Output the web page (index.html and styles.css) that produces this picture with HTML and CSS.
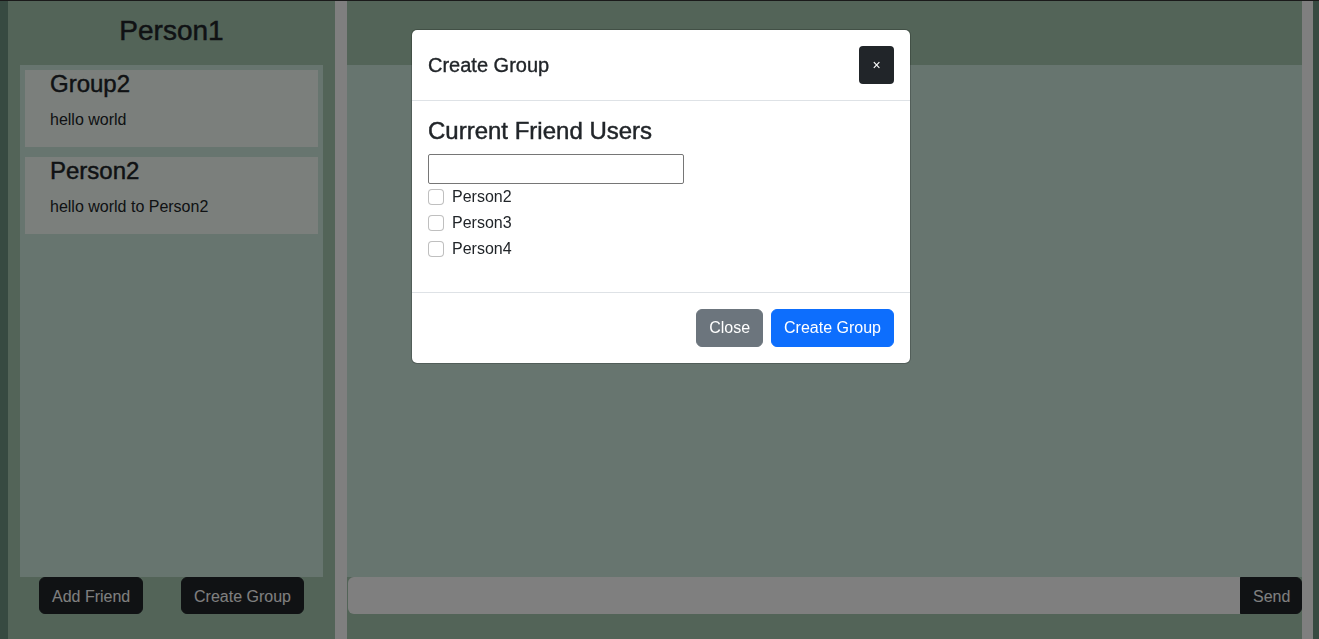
FILE: index.html
```html
<!DOCTYPE html>
<html lang="en">
<head>
<meta charset="utf-8">
<title>Chat</title>
<link rel="stylesheet" href="styles.css">
</head>
<body>
<div class="app">
  <aside class="sidebar">
    <h3 class="user-name">Person1</h3>
    <div class="chat-list">
      <div class="chat-card">
        <h4 class="chat-title">Group2</h4>
        <p class="chat-last">hello world</p>
      </div>
      <div class="chat-card">
        <h4 class="chat-title">Person2</h4>
        <p class="chat-last">hello world to Person2</p>
      </div>
    </div>
    <div class="side-actions">
      <button class="btn btn-dark">Add Friend</button>
      <button class="btn btn-dark">Create Group</button>
    </div>
  </aside>
  <div class="divider"></div>
  <main class="chat">
    <div class="chat-header"></div>
    <div class="chat-body"></div>
    <div class="chat-input-row">
      <input class="chat-input" type="text">
      <button class="btn btn-dark btn-send">Send</button>
    </div>
  </main>
  <div class="divider divider-right"></div>
</div>

<div class="backdrop"></div>
<div class="modal">
  <div class="modal-content">
    <div class="modal-header">
      <h5 class="modal-title">Create Group</h5>
      <button class="btn-x">×</button>
    </div>
    <div class="modal-body">
      <h4 class="section-title">Current Friend Users</h4>
      <input class="group-name" type="text">
      <ul class="friend-list">
        <li class="friend"><span class="check"></span><span>Person2</span></li>
        <li class="friend"><span class="check"></span><span>Person3</span></li>
        <li class="friend"><span class="check"></span><span>Person4</span></li>
      </ul>
    </div>
    <div class="modal-footer">
      <button class="btn btn-secondary">Close</button>
      <button class="btn btn-primary">Create Group</button>
    </div>
  </div>
</div>
</body>
</html>
```

FILE: styles.css
```css
* { box-sizing: border-box; }

html, body {
  margin: 0;
  height: 100%;
}

body {
  background: #6e9482;
  border-top: 1px solid #343434;
  font-family: "Liberation Sans", Arial, sans-serif;
  color: #212529;
  font-size: 16px;
  overflow: hidden;
}

.app {
  display: flex;
  height: 638px;
  padding: 0 6px 0 8px;
}

.sidebar {
  width: 327px;
  background: #a6c8b0;
  display: flex;
  flex-direction: column;
}

.user-name {
  margin: 0;
  height: 64px;
  padding-bottom: 5px;
  display: flex;
  align-items: center;
  justify-content: center;
  font-size: 28px;
  font-weight: 500;
  line-height: 1.2;
  -webkit-text-stroke: 0.5px currentColor;
}

.chat-list {
  flex: 1;
  margin: 0 12px;
  background: #ceeade;
  padding: 5px;
}

.chat-card {
  background: #f6fff8;
  height: 77px;
  padding-left: 25px;
  margin-bottom: 10px;
}

.chat-title {
  margin: 0 0 9px;
  font-size: 24px;
  font-weight: 500;
  line-height: 1.2;
  -webkit-text-stroke: 0.45px currentColor;
}

.chat-last {
  margin: 0;
  line-height: 24px;
}

.side-actions {
  display: flex;
  justify-content: space-between;
  padding: 0 31px;
  height: 62px;
}

.btn {
  font-family: inherit;
  font-size: 16px;
  line-height: 24px;
  padding: 6px 12px;
  border: 1px solid transparent;
  border-radius: 6px;
  cursor: pointer;
  height: 38px;
}

.btn-dark {
  background: #212529;
  border-color: #212529;
  color: #fff;
}

.side-actions .btn {
  height: 37px;
  padding-top: 7px;
  padding-bottom: 5px;
}

.divider {
  width: 12px;
  background: #fff;
}

.divider-right {
  width: 11px;
}

.chat {
  flex: 1;
  display: flex;
  flex-direction: column;
  background: #a6c8b0;
}

.chat-header {
  height: 64px;
}

.chat-body {
  flex: 1;
  background: #ceeade;
}

.chat-input-row {
  display: flex;
  height: 62px;
  padding-left: 1px;
}

.chat-input {
  flex: 1;
  height: 37px;
  border: 0;
  border-radius: 6px 0 0 6px;
  background: #fff;
  font-family: inherit;
  font-size: 16px;
}

.btn-send {
  height: 37px;
  width: 62px;
  border-radius: 0 6px 6px 0;
  padding: 7px 12px 5px;
}

.backdrop {
  position: fixed;
  inset: 0;
  background: rgba(0, 0, 0, 0.5);
}

.modal {
  position: fixed;
  inset: 0;
  display: flex;
  justify-content: center;
  align-items: flex-start;
  padding: 29px 0 0 3px;
}

.modal-content {
  width: 500px;
  background: #fff;
  border: 1px solid rgba(0, 0, 0, 0.2);
  border-radius: 6px;
  background-clip: padding-box;
}

.modal-header {
  display: flex;
  align-items: center;
  justify-content: space-between;
  padding: 16px;
  border-bottom: 1px solid #dee2e6;
  height: 71px;
}

.modal-title {
  margin: 0;
  font-size: 20px;
  font-weight: 500;
  line-height: 1.5;
  -webkit-text-stroke: 0.35px currentColor;
}

.btn-x {
  width: 35px;
  height: 38px;
  background: #212529;
  color: #fff;
  border: 0;
  border-radius: 4px;
  font-family: inherit;
  font-size: 14px;
  padding: 0;
}

.modal-body {
  padding: 16px;
}

.section-title {
  margin: 0 0 8px;
  font-size: 24px;
  font-weight: 500;
  line-height: 1.2;
  -webkit-text-stroke: 0.45px currentColor;
}

.group-name {
  display: block;
  width: 256px;
  height: 30px;
  border: 1px solid #767676;
  border-radius: 2px;
  margin: 0;
}

.friend-list {
  list-style: none;
  margin: 0 0 14px;
  padding: 0;
}

.friend {
  display: flex;
  align-items: center;
  gap: 8px;
  height: 26px;
  line-height: 24px;
}

.check {
  width: 16px;
  height: 16px;
  border: 1px solid rgba(0, 0, 0, 0.25);
  border-radius: 4px;
  background: #fff;
}

.modal-footer {
  display: flex;
  justify-content: flex-end;
  align-items: center;
  gap: 8px;
  padding: 16px 16px 16px;
  border-top: 1px solid #dee2e6;
}

.btn-secondary {
  background: #6c757d;
  border-color: #6c757d;
  color: #fff;
}

.btn-primary {
  background: #0d6efd;
  border-color: #0d6efd;
  color: #fff;
}
```
